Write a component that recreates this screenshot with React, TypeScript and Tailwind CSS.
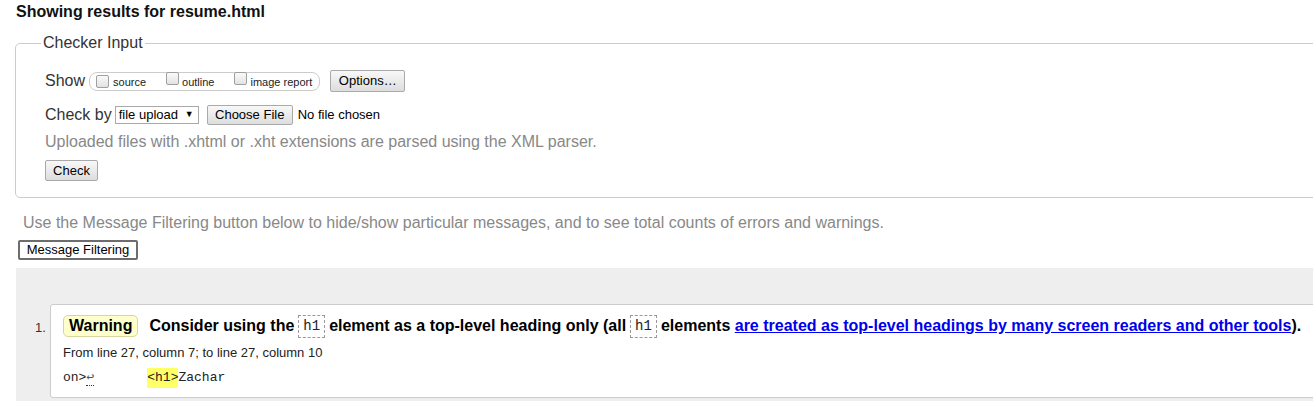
import React from 'react'

const sans = { fontFamily: '"Liberation Sans", Arial, sans-serif' }

function Box() {
  return (
    <span className="inline-block h-[13px] w-[13px] rounded-[2px] border border-[#a0a0a0] bg-gradient-to-b from-[#fafafa] to-[#e3e3e3]" />
  )
}

function Btn({ children, className = '' }: { children: React.ReactNode; className?: string }) {
  return (
    <span
      className={
        'inline-flex items-center justify-center rounded-[2px] border border-[#a9a9a9] bg-gradient-to-b from-[#f8f8f8] to-[#dddddd] text-[13px] text-black ' +
        className
      }
    >
      {children}
    </span>
  )
}

function Code({ children }: { children: React.ReactNode }) {
  return (
    <span className="mx-[4px] inline-block border border-dashed border-[#999] px-[4px] font-['Liberation_Mono',monospace] text-[14px] font-normal leading-[21px] text-[#222]">
      {children}
    </span>
  )
}

export default function App() {
  return (
    <div className="w-full overflow-hidden bg-white text-[#222]" style={sans}>
      <div className="w-[1400px]">
        <h2 className="pl-4 pt-[3px] text-[16px] font-bold leading-[18px] text-[#111]">
          Showing results for resume.html
        </h2>

        <fieldset className="ml-[15px] mt-[13px] rounded-[5px] border border-[#cccccc] px-[29px] pb-[16px]">
          <legend className="-ml-[4px] px-[2px] text-[16px] leading-[18px] text-[#333]">Checker Input</legend>

          <div className="mt-[17px] flex h-[24px] items-center">
            <span className="text-[16px] text-[#333]">Show</span>
            <span className="ml-[4px] flex h-[19px] items-center rounded-[8px] border border-[#cccccc] pl-[6px] pr-[7px] text-[11px] text-[#222]">
              <Box />
              <span className="ml-[4px] mt-[3px]">source</span>
              <span className="ml-[20px]"><Box /></span>
              <span className="ml-[3px] mt-[3px]">outline</span>
              <span className="ml-[20px]"><Box /></span>
              <span className="ml-[3px] mt-[3px]">image report</span>
            </span>
            <Btn className="ml-[10px] h-[22px] w-[75px]">Options…</Btn>
          </div>

          <div className="mt-[10px] flex h-[24px] items-center">
            <span className="text-[16px] text-[#333]">Check by</span>
            <span className="ml-[3px] flex h-[18px] w-[84px] items-center justify-between border border-[#a9a9a9] bg-white pl-[3px] pr-[4px] text-[13px] text-black">
              <span>file upload</span>
              <span className="text-[9px]">▼</span>
            </span>
            <Btn className="ml-[8px] h-[20px] w-[86px]">Choose File</Btn>
            <span className="ml-[5px] text-[13px] text-black">No file chosen</span>
          </div>

          <p className="mt-[6px] text-[16px] leading-[18px] text-[#888]">
            Uploaded files with .xhtml or .xht extensions are parsed using the XML parser.
          </p>

          <div className="mt-[9px] flex">
            <Btn className="h-[21px] w-[53px]">Check</Btn>
          </div>
        </fieldset>

        <p className="ml-[23px] mt-[16px] text-[16px] leading-[18px] text-[#888]">
          Use the Message Filtering button below to hide/show particular messages, and to see total counts of errors and warnings.
        </p>

        <div className="ml-[18px] mt-[8px] flex">
          <span className="inline-flex h-[20px] w-[120px] items-center justify-center rounded-[2px] border-2 border-[#6d6d6d] bg-white text-[13px] text-black">
            Message Filtering
          </span>
        </div>

        <div className="ml-4 mt-[8px] bg-[#eeeeee] pb-[4px] pt-[36px]">
          <div className="flex">
            <span className="w-[34px] pl-[19px] pt-[14px] text-[13px] text-[#333]">1.</span>
            <div className="flex-1 rounded-[3px] border border-[#cccccc] bg-white pb-[9px] pl-[12px] pt-[9px]">
              <div className="flex h-[24px] items-center whitespace-nowrap text-[16px] font-bold text-black">
                <span className="inline-flex h-[22px] items-center rounded-[5px] border border-[#d6d6a0] bg-[#ffffcc] px-[5px]">
                  Warning
                </span>
                <span className="ml-[11px]">Consider using the</span>
                <Code>h1</Code>
                <span>element as a top-level heading only (all</span>
                <Code>h1</Code>
                <span>
                  elements{' '}
                  <a className="text-[#0000ee] underline">
                    are treated as top-level headings by many screen readers and other tools
                  </a>
                  ).
                </span>
              </div>
              <p className="mt-[6px] text-[13px] leading-[18px] text-[#222]">
                From line 27, column 7; to line 27, column 10
              </p>
              <div className="mt-[6px] flex h-[20px] items-center font-['Liberation_Mono',monospace] text-[13px] text-[#222]">
                <span>on&gt;</span>
                <span className="border-b border-dotted border-[#333] leading-[15px] text-[#555]">↩</span>
                <span className="ml-[53px] bg-[#ffff66] leading-[20px]">&lt;h1&gt;</span>
                <span>Zachar</span>
              </div>
            </div>
          </div>
        </div>
      </div>
    </div>
  )
}
